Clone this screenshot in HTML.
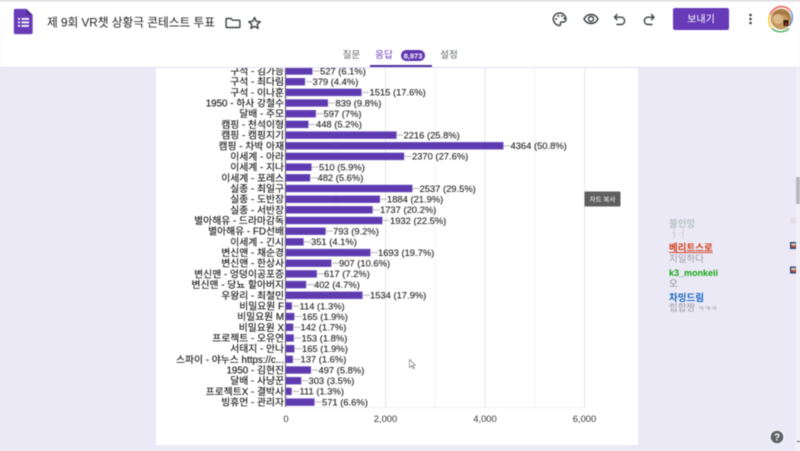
<!DOCTYPE html>
<html lang="ko">
<head>
<meta charset="utf-8">
<title>제 9회 VR챗 상황극 콘테스트 투표</title>
<style>
html,body{margin:0;padding:0;width:800px;height:451px;overflow:hidden;background:#ece9f7}
svg{display:block;filter:blur(.4px)}
text{font-family:"Liberation Sans","Noto Sans CJK KR",sans-serif}
.l{font-size:9.8px;fill:#111;stroke:#111;stroke-width:.12;text-anchor:end}
.v{font-size:9.4px;fill:#222;stroke:#222;stroke-width:.1}
.b{fill:#5e3ab1;stroke:#7b5cc4;stroke-width:.5}
.ld{stroke:#b5b5b5;stroke-width:1}
.ax{font-size:9.4px;fill:#333;text-anchor:middle}
.ic{fill:none;stroke:#3c4043;stroke-width:1.4;stroke-linecap:round;stroke-linejoin:round}
.c{font-size:9.5px}
</style>
</head>
<body>
<svg width="800" height="451" viewBox="0 0 800 451" xmlns="http://www.w3.org/2000/svg">
<rect width="800" height="451" fill="#ece9f7"/>
<!-- card -->
<rect x="156" y="60" width="482" height="385" fill="#fff"/>
<!-- grid -->
<g stroke="#f3f3f3"><line x1="336" y1="60" x2="336" y2="407"/><line x1="435" y1="60" x2="435" y2="407"/><line x1="534.500" y1="60" x2="534.500" y2="407"/></g>
<g stroke="#e4e4e4"><line x1="385.500" y1="60" x2="385.500" y2="407"/><line x1="485" y1="60" x2="485" y2="407"/><line x1="584.500" y1="60" x2="584.500" y2="407"/><line x1="286" y1="407.500" x2="585" y2="407.500" stroke="#eee"/></g>
<line x1="285.500" y1="60" x2="285.500" y2="407" stroke="#555"/>
<!-- rows -->
<rect class="b" x="286" y="67.500" width="26.200" height="7"/><line class="ld" x1="313" y1="71" x2="320" y2="71"/><text class="l" x="284" y="74.500">구석 - 김가능</text><text class="v" x="320" y="74.300">527 (6.1%)</text>
<rect class="b" x="286" y="78.200" width="18.900" height="7"/><line class="ld" x1="306" y1="81.700" x2="312" y2="81.700"/><text class="l" x="284" y="85.200">구석 - 최다림</text><text class="v" x="312.500" y="85">379 (4.4%)</text>
<rect class="b" x="286" y="88.900" width="75.400" height="7"/><line class="ld" x1="362" y1="92.400" x2="369" y2="92.400"/><text class="l" x="284" y="95.900">구석 - 이나훈</text><text class="v" x="369.500" y="95.700">1515 (17.6%)</text>
<rect class="b" x="286" y="99.500" width="41.800" height="7"/><line class="ld" x1="328.500" y1="103" x2="335" y2="103"/><text class="l" x="284" y="106.500">1950 - 하사 강철수</text><text class="v" x="335.500" y="106.300">839 (9.8%)</text>
<rect class="b" x="286" y="110.200" width="29.700" height="7"/><line class="ld" x1="316.500" y1="113.700" x2="323" y2="113.700"/><text class="l" x="284" y="117.200">달배 - 주모</text><text class="v" x="323.500" y="117">597 (7%)</text>
<rect class="b" x="286" y="120.900" width="22.300" height="7"/><line class="ld" x1="309" y1="124.400" x2="316" y2="124.400"/><text class="l" x="284" y="127.900">캠핑 - 천석이형</text><text class="v" x="316" y="127.700">448 (5.2%)</text>
<rect class="b" x="286" y="131.600" width="110.400" height="7"/><line class="ld" x1="397" y1="135.100" x2="403" y2="135.100"/><text class="l" x="284" y="138.600">캠핑 - 캠핑지기</text><text class="v" x="403.500" y="138.400">2216 (25.8%)</text>
<rect class="b" x="286" y="142.300" width="217.300" height="7"/><line class="ld" x1="504" y1="145.800" x2="510" y2="145.800"/><text class="l" x="284" y="149.300">캠핑 - 차박 아재</text><text class="v" x="510.500" y="149.100">4364 (50.8%)</text>
<rect class="b" x="286" y="152.900" width="118" height="7"/><line class="ld" x1="405" y1="156.400" x2="411.500" y2="156.400"/><text class="l" x="284" y="159.900">이세계 - 아라</text><text class="v" x="412" y="159.700">2370 (27.6%)</text>
<rect class="b" x="286" y="163.600" width="25.400" height="7"/><line class="ld" x1="312" y1="167.100" x2="319" y2="167.100"/><text class="l" x="284" y="170.600">이세계 - 지나</text><text class="v" x="319" y="170.400">510 (5.9%)</text>
<rect class="b" x="286" y="174.300" width="24" height="7"/><line class="ld" x1="311" y1="177.800" x2="317.500" y2="177.800"/><text class="l" x="284" y="181.300">이세계 - 포레스</text><text class="v" x="317.500" y="181.100">482 (5.6%)</text>
<rect class="b" x="286" y="185" width="126.300" height="7"/><line class="ld" x1="413" y1="188.500" x2="419.500" y2="188.500"/><text class="l" x="284" y="192">실종 - 최일구</text><text class="v" x="419.500" y="191.800">2537 (29.5%)</text>
<rect class="b" x="286" y="195.700" width="93.800" height="7"/><line class="ld" x1="380.500" y1="199.200" x2="387" y2="199.200"/><text class="l" x="284" y="202.700">실종 - 도반장</text><text class="v" x="387" y="202.500">1884 (21.9%)</text>
<rect class="b" x="286" y="206.300" width="86.500" height="7"/><line class="ld" x1="373" y1="209.800" x2="380" y2="209.800"/><text class="l" x="284" y="213.300">실종 - 서반장</text><text class="v" x="380" y="213.100">1737 (20.2%)</text>
<rect class="b" x="286" y="217" width="96.200" height="7"/><line class="ld" x1="383" y1="220.500" x2="389.500" y2="220.500"/><text class="l" x="284" y="224">별아해유 - 드라마감독</text><text class="v" x="390" y="223.800">1932 (22.5%)</text>
<rect class="b" x="286" y="227.700" width="39.500" height="7"/><line class="ld" x1="326" y1="231.200" x2="333" y2="231.200"/><text class="l" x="284" y="234.700">별아해유 - FD선배</text><text class="v" x="333" y="234.500">793 (9.2%)</text>
<rect class="b" x="286" y="238.400" width="17.500" height="7"/><line class="ld" x1="304" y1="241.900" x2="311" y2="241.900"/><text class="l" x="284" y="245.400">이세계 - 긴시</text><text class="v" x="311" y="245.200">351 (4.1%)</text>
<rect class="b" x="286" y="249.100" width="84.300" height="7"/><line class="ld" x1="371" y1="252.600" x2="378" y2="252.600"/><text class="l" x="284" y="256.100">변신맨 - 채순경</text><text class="v" x="378" y="255.900">1693 (19.7%)</text>
<rect class="b" x="286" y="259.700" width="45.200" height="7"/><line class="ld" x1="332" y1="263.200" x2="339" y2="263.200"/><text class="l" x="284" y="266.700">변신맨 - 한상사</text><text class="v" x="339" y="266.500">907 (10.6%)</text>
<rect class="b" x="286" y="270.400" width="30.700" height="7"/><line class="ld" x1="317.500" y1="273.900" x2="324" y2="273.900"/><text class="l" x="284" y="277.400">변신맨 - 엉덩이공포증</text><text class="v" x="324" y="277.200">617 (7.2%)</text>
<rect class="b" x="286" y="281.100" width="20" height="7"/><line class="ld" x1="307" y1="284.600" x2="314" y2="284.600"/><text class="l" x="284" y="288.100">변신맨 - 당뇨 할아버지</text><text class="v" x="314" y="287.900">402 (4.7%)</text>
<rect class="b" x="286" y="291.800" width="76.400" height="7"/><line class="ld" x1="363" y1="295.300" x2="370" y2="295.300"/><text class="l" x="284" y="298.800">우왕리 - 최철민</text><text class="v" x="370" y="298.600">1534 (17.9%)</text>
<rect class="b" x="286" y="302.500" width="5.700" height="7"/><line class="ld" x1="292.500" y1="306" x2="299" y2="306"/><text class="l" x="284" y="309.500">비밀요원 F</text><text class="v" x="299.500" y="309.300">114 (1.3%)</text>
<rect class="b" x="286" y="313.100" width="8.200" height="7"/><line class="ld" x1="295" y1="316.600" x2="302" y2="316.600"/><text class="l" x="284" y="320.100">비밀요원 M</text><text class="v" x="302" y="319.900">165 (1.9%)</text>
<rect class="b" x="286" y="323.800" width="7.100" height="7"/><line class="ld" x1="294" y1="327.300" x2="300.500" y2="327.300"/><text class="l" x="284" y="330.800">비밀요원 X</text><text class="v" x="300.500" y="330.600">142 (1.7%)</text>
<rect class="b" x="286" y="334.500" width="7.600" height="7"/><line class="ld" x1="294.500" y1="338" x2="301" y2="338"/><text class="l" x="284" y="341.500">프로젝트 - 오유연</text><text class="v" x="301.500" y="341.300">153 (1.8%)</text>
<rect class="b" x="286" y="345.200" width="8.200" height="7"/><line class="ld" x1="295" y1="348.700" x2="302" y2="348.700"/><text class="l" x="284" y="352.200">서태지 - 안나</text><text class="v" x="302" y="352">165 (1.9%)</text>
<rect class="b" x="286" y="355.900" width="6.800" height="7"/><line class="ld" x1="293.500" y1="359.400" x2="300.500" y2="359.400"/><text class="l" x="284" y="362.900">스파이 - 야누스 https://c...</text><text class="v" x="300.500" y="362.700">137 (1.6%)</text>
<rect class="b" x="286" y="366.500" width="24.800" height="7"/><line class="ld" x1="311.500" y1="370" x2="318" y2="370"/><text class="l" x="284" y="373.500">1950 - 김현진</text><text class="v" x="318.500" y="373.300">497 (5.8%)</text>
<rect class="b" x="286" y="377.200" width="15.100" height="7"/><line class="ld" x1="302" y1="380.700" x2="308.500" y2="380.700"/><text class="l" x="284" y="384.200">달배 - 사냥꾼</text><text class="v" x="308.500" y="384">303 (3.5%)</text>
<rect class="b" x="286" y="387.900" width="5.500" height="7"/><line class="ld" x1="292.500" y1="391.400" x2="299" y2="391.400"/><text class="l" x="284" y="394.900">프로젝트X - 결박사</text><text class="v" x="299.500" y="394.700">111 (1.3%)</text>
<rect class="b" x="286" y="398.600" width="28.400" height="7"/><line class="ld" x1="315" y1="402.100" x2="321.500" y2="402.100"/><text class="l" x="284" y="405.600">빙휴먼 - 관리자</text><text class="v" x="322" y="405.400">571 (6.6%)</text>
<!-- axis -->
<text class="ax" x="286" y="422">0</text><text class="ax" x="385.500" y="422">2,000</text><text class="ax" x="485" y="422">4,000</text><text class="ax" x="584.500" y="422">6,000</text>
<!-- copy chart tooltip -->
<rect x="584.500" y="191.500" width="36" height="15" rx="1" fill="#5f5f5f"/>
<text x="602.500" y="201.500" font-size="6.500" fill="#fff" text-anchor="middle">차트 복사</text>
<!-- cursor -->
<path d="M409.500 359.500v8l2-1.800 1.500 3 1.200-.6-1.400-2.800h2.600z" fill="#fff" stroke="#777" stroke-width=".7"/>
<!-- header -->
<rect x="0" y="0" width="800" height="67" fill="#fff"/>
<rect x="0" y="0" width="800" height="1.500" fill="#dcdcdc"/>
<rect x="0" y="67" width="800" height="1" fill="#e2e0ea"/>
<!-- forms logo -->
<path d="M15.500 9h11l6 6v17.500a1.500 1.500 0 0 1-1.500 1.500h-15.500a1.500 1.500 0 0 1-1.500-1.500v-22a1.500 1.500 0 0 1 1.500-1.500z" fill="#673ab7" stroke="#7a55c0" stroke-width=".4"/>
<path d="M26.500 9l6 6h-6z" fill="#4a2a8f"/>
<g fill="#fff"><rect x="18" y="18" width="2" height="1.800"/><rect x="21.500" y="18" width="7.500" height="1.800"/><rect x="18" y="21.500" width="2" height="1.800"/><rect x="21.500" y="21.500" width="7.500" height="1.800"/><rect x="18" y="25" width="2" height="1.800"/><rect x="21.500" y="25" width="7.500" height="1.800"/></g>
<text x="47" y="26.500" font-size="11.700" fill="#202124">제 9회 VR챗 상황극 콘테스트 투표</text>
<!-- folder -->
<path class="ic" d="M227 18.500h4l1.500 1.700h6.500a.9.900 0 0 1 .9.900v5.500a.9.900 0 0 1-.9.900h-12a.9.900 0 0 1-.9-.9v-7.200a.9.900 0 0 1 .9-.9z"/>
<!-- star -->
<path class="ic" d="M254.500 17.500l1.700 3.800 4.100.4-3.100 2.700.9 4-3.600-2.100-3.600 2.100.9-4-3.100-2.700 4.100-.4z" stroke-width="1.200"/>
<!-- tabs -->
<text x="351.500" y="58" font-size="9.600" fill="#5f6368" text-anchor="middle">질문</text>
<text x="384" y="58" font-size="9.600" fill="#673ab7" text-anchor="middle">응답</text>
<rect x="401" y="50" width="24" height="11" rx="5.500" fill="#5e35b1"/>
<text x="413" y="58.300" font-size="7.500" font-weight="bold" fill="#fff" text-anchor="middle">8,973</text>
<text x="449" y="58" font-size="9.600" fill="#5f6368" text-anchor="middle">설정</text>
<rect x="370" y="65" width="62" height="2" fill="#4f2ca0"/>
<!-- palette -->
<path class="ic" d="M560 13c-3.700 0-6.700 2.700-6.700 6s3 6.500 6 6.500c1.200 0 1.500-.8 1.200-1.500-.5-1 .1-2 1.200-2h1.700c1.500 0 2.600-1.100 2.600-2.600 0-3.400-2.700-6.400-6-6.400z"/>
<g fill="#3c4043"><circle cx="556.200" cy="19" r="1"/><circle cx="558.300" cy="16" r="1"/><circle cx="562" cy="16" r="1"/><circle cx="564.300" cy="18.500" r="1"/></g>
<!-- eye -->
<path class="ic" d="M584 19c1.500-3 4-4.500 7-4.500s5.500 1.500 7 4.500c-1.500 3-4 4.500-7 4.500s-5.500-1.500-7-4.500z"/><circle class="ic" cx="591" cy="19" r="2.500"/>
<!-- undo -->
<path class="ic" d="M617 14.500l-2.500 2.700 2.500 2.600M615 17.200h6.500a3.700 3.700 0 0 1 0 7.300h-4.500"/>
<!-- redo -->
<path class="ic" d="M651.500 14.500l2.500 2.700-2.500 2.600M654 17.200h-6.500a3.700 3.700 0 0 0 0 7.300h4.500"/>
<!-- send -->
<rect x="673" y="8" width="56" height="22" rx="2" fill="#673ab7"/>
<text x="701" y="22.700" font-size="10" fill="#fff" text-anchor="middle">보내기</text>
<!-- dots -->
<g fill="#3c4043"><circle cx="750.500" cy="15" r="1.300"/><circle cx="750.500" cy="19" r="1.300"/><circle cx="750.500" cy="23" r="1.300"/></g>
<!-- avatar -->
<path d="M781 6.500a12.500 12.500 0 0 1 10 5" fill="none" stroke="#ea4335" stroke-width="1.200"/>
<path d="M791 11.500a12.500 12.500 0 0 1-2 14.500" fill="none" stroke="#4285f4" stroke-width="1.200"/>
<path d="M789 28.500a12.500 12.500 0 0 1-17 0" fill="none" stroke="#34a853" stroke-width="1.200"/>
<path d="M772 28.500a12.500 12.500 0 0 1-2-14" fill="none" stroke="#fbbc05" stroke-width="1.200"/>
<path d="M770 14.500a12.500 12.500 0 0 1 11-8" fill="none" stroke="#ea4335" stroke-width="1.200"/>
<circle cx="781" cy="19" r="10.500" fill="#c79a62"/>
<path d="M772 15c3-6 13-7 17-2 1 3 1 6 .5 8-2-3-3-6-5-6-4 0-9 0-12.500 0z" fill="#a57a45"/>
<circle cx="778" cy="19" r="5" fill="#dcb98a"/>
<rect x="783.500" y="20" width="5" height="6" rx="1" fill="#2a1b12"/>
<rect x="785" y="23" width="2.500" height="1.800" fill="#d32f1f"/>
<!-- chat overlay -->
<text class="c" x="669" y="227" font-weight="bold" fill="#b5c4c4">불인망</text>
<text class="c" x="669" y="237" fill="#c4c4cc">ㅓㅓ</text>
<text class="c" x="669" y="251" font-weight="bold" fill="#d2401a" text-decoration="underline">베리트스로</text>
<text class="c" x="669" y="262" fill="#9c9ca4">치일하다</text>
<text class="c" x="669" y="276" font-size="9" style="font-size:9px" font-weight="bold" fill="#12a812">k3_monkeii</text>
<text class="c" x="669" y="287" fill="#8a8a92">오</text>
<text class="c" x="669" y="301" font-weight="bold" fill="#1565c0">차밍드림</text>
<text class="c" x="669" y="311" fill="#9c9ca4">힙합짱 <tspan font-size="7">ㅋㅋㅋ</tspan></text>
<!-- small chat icons -->
<rect x="790.500" y="217.500" width="6" height="6" fill="#e3dfe6"/>
<rect x="790" y="242" width="7" height="7" fill="#24496e"/><rect x="791.300" y="243.300" width="4.400" height="2.400" fill="#e8c0a8"/><rect x="791.300" y="245.800" width="4.400" height="1.800" fill="#c0503a"/>
<rect x="790" y="266.500" width="7" height="7" fill="#24496e"/><rect x="791.300" y="267.800" width="4.400" height="2.400" fill="#e8c0a8"/><rect x="791.300" y="270.300" width="4.400" height="1.800" fill="#c0503a"/>
<!-- scrollbar -->
<rect x="796" y="68" width="4" height="383" fill="#f1f0f5"/>
<rect x="796" y="177" width="4" height="27" fill="#b9b9bd"/>
<!-- help -->
<circle cx="777" cy="437" r="7.500" fill="#fff" fill-opacity=".7"/>
<circle cx="777" cy="437" r="6.300" fill="#5f6368"/>
<text x="777" y="440.700" font-size="10" font-weight="bold" fill="#fff" text-anchor="middle">?</text>
<rect x="797" y="441" width="3" height="1" fill="#555"/>
</svg>
</body>
</html>
